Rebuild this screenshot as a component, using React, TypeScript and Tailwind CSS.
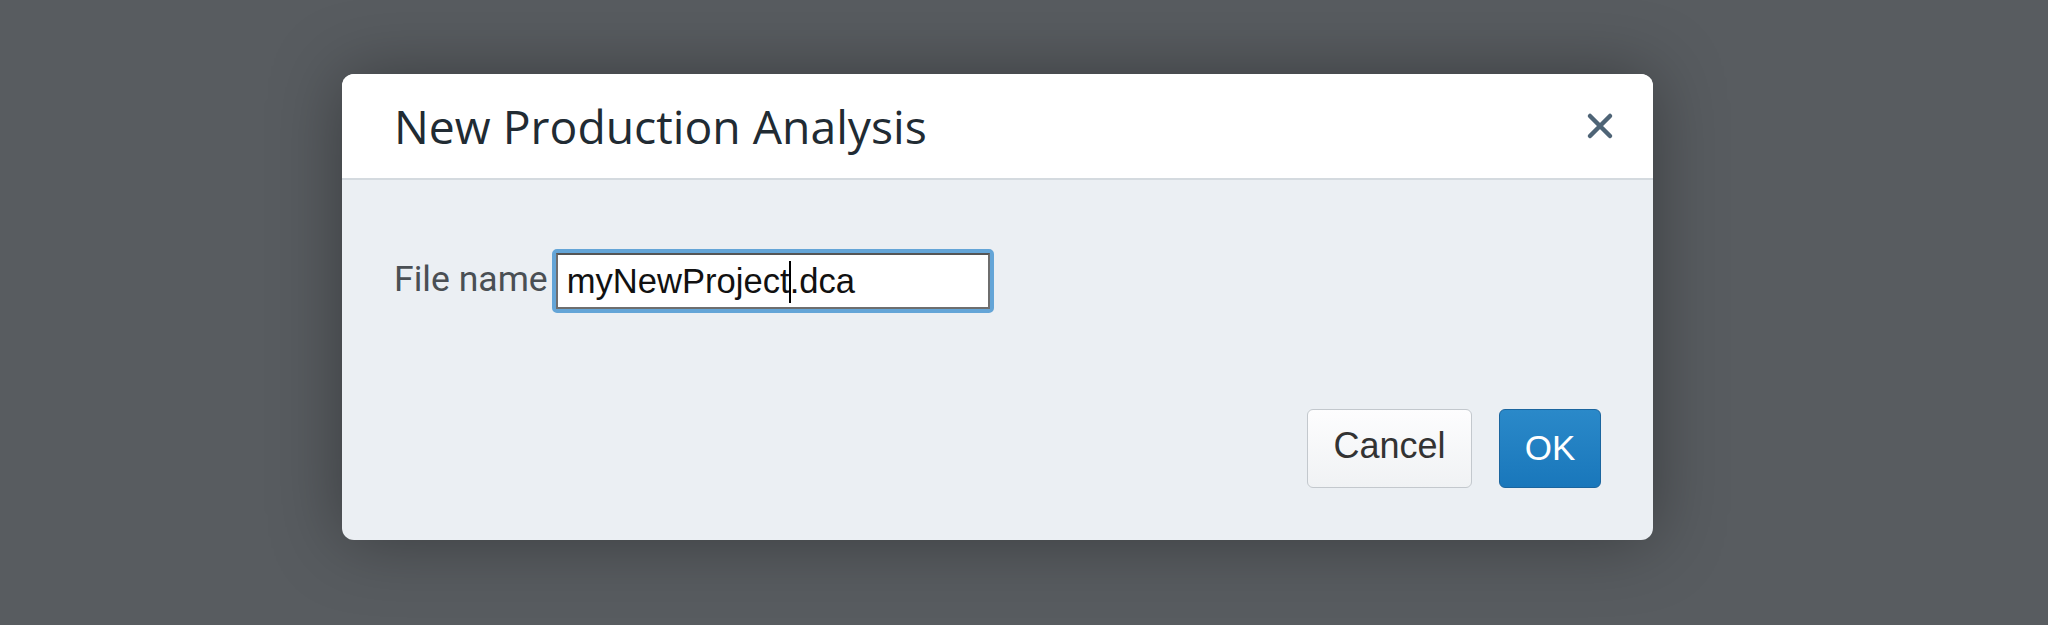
import React from "react";

function CloseIcon() {
  return (
    <svg width="28" height="28" viewBox="0 0 28 28" fill="none">
      <path
        d="M4 4L24 24M24 4L4 24"
        stroke="#4e6476"
        strokeWidth="4.5"
        strokeLinecap="round"
      />
    </svg>
  );
}

export default function App() {
  return (
    <div className="w-[2048px] h-[625px] bg-[#585c60] overflow-hidden pt-[74px] pl-[342px]">
      <div className="w-[1311px] h-[466px] rounded-[12px] overflow-hidden bg-[#ebeff3] shadow-[0_0_70px_rgba(0,0,0,0.35)] flex flex-col">
        {/* Header */}
        <div className="h-[106px] shrink-0 bg-white border-b-2 border-[#d4dadf] flex items-center justify-between pl-[52px] pr-[38px] pt-[3px]">
          <h2 className="font-['Open_Sans',sans-serif] text-[46.3px] leading-none text-[#212b33]">
            New Production Analysis
          </h2>
          <button className="w-[30px] h-[30px] flex items-center justify-center -mt-[3px]">
            <CloseIcon />
          </button>
        </div>

        {/* Body */}
        <div className="flex-1 flex flex-col justify-between pt-[69px] pb-[52px] px-[52px]">
          <div className="flex items-center">
            <label className="font-['Roboto',sans-serif] text-[35.6px] leading-none text-[#4a4f54] pb-[2px]">
              File name
            </label>
            <div className="ml-[4px] rounded-[5px] border-[4px] border-[#64a5d7]">
              <div className="w-[434px] h-[56px] bg-white border-2 border-[#6e6e6e] border-t-[#555] flex items-center pl-[9px] font-['Liberation_Sans',Arial,sans-serif] text-[34.6px] leading-none text-[#111]">
                <span>myNewProject</span>
                <span className="inline-block w-[2px] h-[42px] bg-black -mx-[1px] mt-[2px]" />
                <span>.dca</span>
              </div>
            </div>
          </div>

          <div className="flex justify-end gap-[27px]">
            <button className="w-[165px] h-[79px] rounded-[6px] border-[1.5px] border-[#c3c8cd] bg-gradient-to-b from-[#fdfdfe] to-[#f0f2f4] flex items-center justify-center pb-[6px] font-['Liberation_Sans',Arial,sans-serif] text-[36px] leading-none text-[#333]">
              Cancel
            </button>
            <button className="w-[102px] h-[79px] rounded-[6px] border-[1.5px] border-[#1b659e] bg-gradient-to-b from-[#2a89c9] to-[#1977bb] flex items-center justify-center pb-[2px] font-['Liberation_Sans',Arial,sans-serif] text-[35px] leading-none text-white">
              OK
            </button>
          </div>
        </div>
      </div>
    </div>
  );
}
